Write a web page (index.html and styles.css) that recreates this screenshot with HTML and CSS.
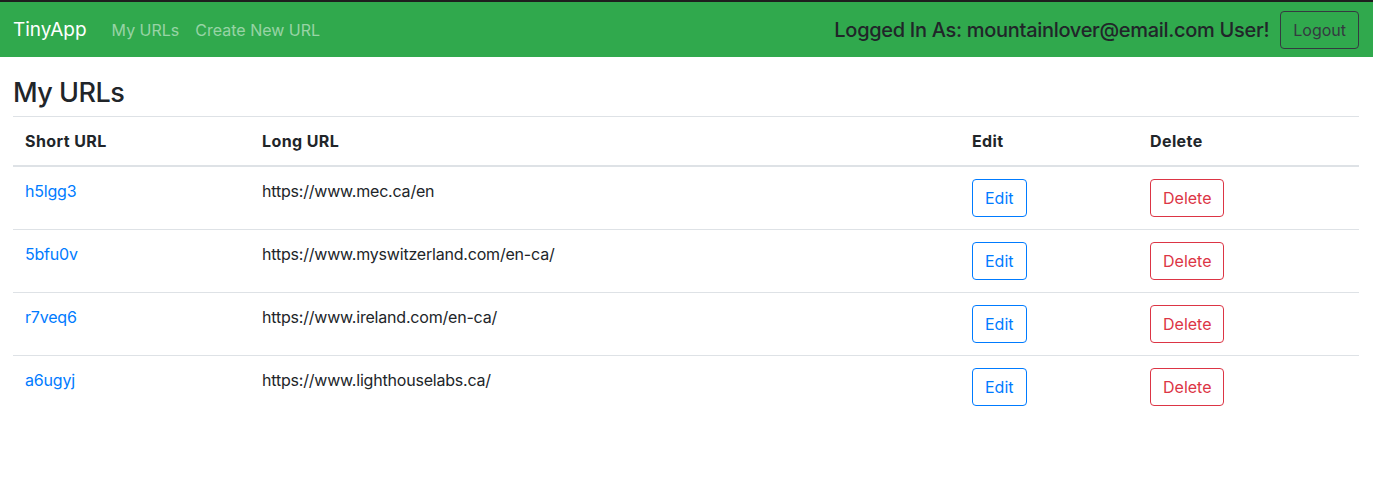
FILE: index.html
```html
<!DOCTYPE html>
<html lang="en">
<head>
<meta charset="utf-8">
<title>TinyApp</title>
<link rel="stylesheet" href="styles.css">
</head>
<body>
<nav class="navbar">
  <div class="nav-left">
    <a class="brand" href="#">TinyApp</a>
    <a class="nav-link" href="#">My URLs</a>
    <a class="nav-link" href="#">Create New URL</a>
  </div>
  <div class="nav-right">
    <span class="user">Logged In As: mountainlover@email.com User!</span>
    <button class="btn btn-dark">Logout</button>
  </div>
</nav>
<main class="content">
  <h3 class="title">My URLs</h3>
  <table class="table">
    <thead>
      <tr>
        <th class="c1">Short URL</th>
        <th class="c2">Long URL</th>
        <th class="c3">Edit</th>
        <th class="c4">Delete</th>
      </tr>
    </thead>
    <tbody>
      <tr>
        <td><a href="#">h5lgg3</a></td>
        <td>https://www.mec.ca/en</td>
        <td><button class="btn btn-primary">Edit</button></td>
        <td><button class="btn btn-danger">Delete</button></td>
      </tr>
      <tr>
        <td><a href="#">5bfu0v</a></td>
        <td>https://www.myswitzerland.com/en-ca/</td>
        <td><button class="btn btn-primary">Edit</button></td>
        <td><button class="btn btn-danger">Delete</button></td>
      </tr>
      <tr>
        <td><a href="#">r7veq6</a></td>
        <td>https://www.ireland.com/en-ca/</td>
        <td><button class="btn btn-primary">Edit</button></td>
        <td><button class="btn btn-danger">Delete</button></td>
      </tr>
      <tr>
        <td><a href="#">a6ugyj</a></td>
        <td>https://www.lighthouselabs.ca/</td>
        <td><button class="btn btn-primary">Edit</button></td>
        <td><button class="btn btn-danger">Delete</button></td>
      </tr>
    </tbody>
  </table>
</main>
</body>
</html>
```

FILE: styles.css
```css
html, body {
  margin: 0;
  padding: 0;
}
body {
  font-family: Inter, "Liberation Sans", sans-serif;
  font-size: 16px;
  line-height: 1.5;
  color: #212529;
  background: #fff;
  border-top: 2px solid #1e1e1e;
}
a {
  text-decoration: none;
}
.navbar {
  display: flex;
  align-items: center;
  justify-content: space-between;
  background: #30a94d;
  padding: 9px 14px 8px 13px;
  height: 38px;
  box-sizing: content-box;
}
.nav-left {
  display: flex;
  align-items: center;
}
.brand {
  color: #fff;
  font-size: 19px;
  margin-right: 17px;
}
.nav-link {
  color: rgba(255, 255, 255, 0.5);
  font-size: 16px;
  padding: 8px 8px;
}
.nav-right {
  display: flex;
  align-items: center;
}
.user {
  font-size: 20px;
  letter-spacing: -0.3px;
  font-weight: 500;
  color: #212529;
  margin-right: 11px;
}
.btn {
  font-family: inherit;
  font-size: 16px;
  line-height: 24px;
  padding: 6px 12px;
  background: transparent;
  border: 1px solid;
  border-radius: 4px;
  cursor: pointer;
}
.btn-dark {
  color: #343a40;
  border-color: #343a40;
}
.btn-primary {
  color: #007bff;
  border-color: #007bff;
}
.btn-danger {
  color: #dc3545;
  border-color: #dc3545;
}
.content {
  padding: 0 14px 0 13px;
}
.title {
  font-size: 27px;
  letter-spacing: -0.5px;
  font-weight: 500;
  line-height: 1.2;
  margin: 20px 0 7px;
}
.table {
  width: 100%;
  border-collapse: collapse;
}
.table th, .table td {
  padding: 12px;
  text-align: left;
  vertical-align: top;
  border-top: 1px solid #dee2e6;
}
.table td {
  letter-spacing: -0.2px;
}
.table thead th {
  font-weight: 700;
  letter-spacing: 0.4px;
  border-bottom: 2px solid #dee2e6;
}
.table td .btn {
  letter-spacing: 0;
}
.table td a {
  color: #007bff;
}
.c1 { width: 213px; }
.c2 { width: 686px; }
.c3 { width: 154px; }
```
